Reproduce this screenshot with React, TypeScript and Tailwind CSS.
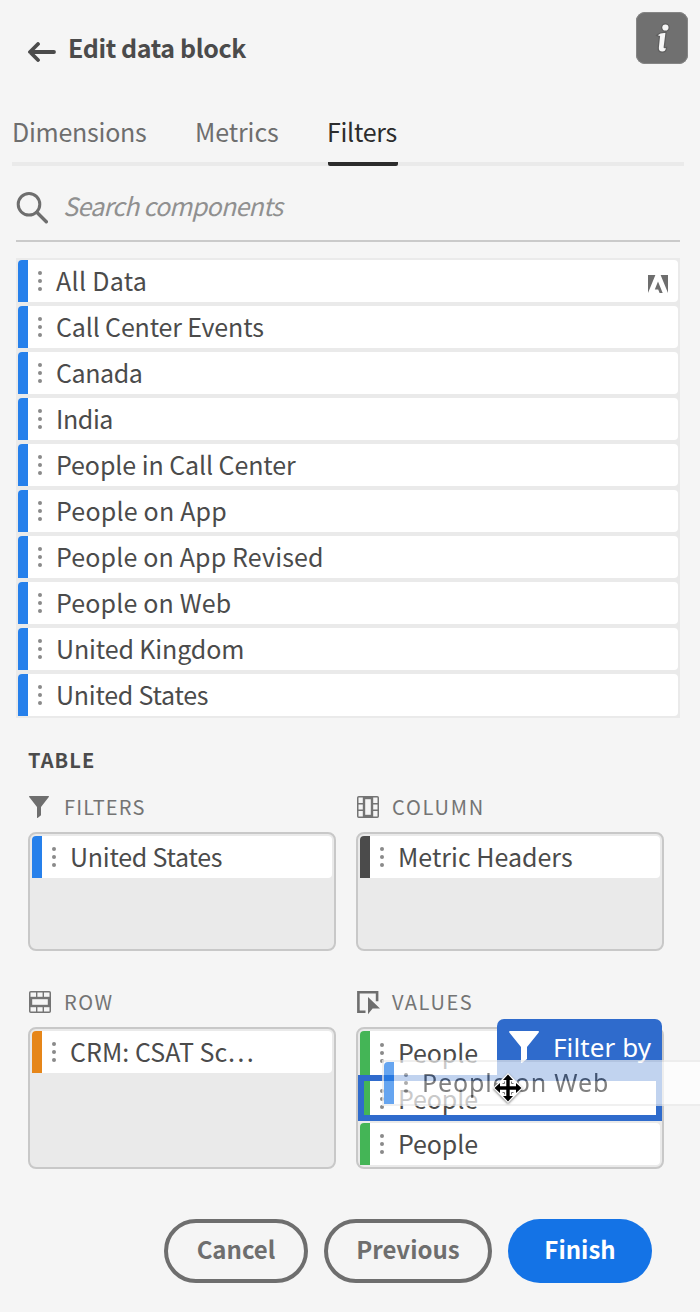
import type { ReactNode } from "react";

const components = [
  { name: "All Data", spacing: "tracking-[0.3px]", adobe: true },
  { name: "Call Center Events", spacing: "tracking-[-0.15px]" },
  { name: "Canada", spacing: "tracking-[-0.4px]" },
  { name: "India", spacing: "tracking-[-0.4px]" },
  { name: "People in Call Center", spacing: "tracking-[-0.08px]" },
  { name: "People on App", spacing: "tracking-[0.2px]" },
  { name: "People on App Revised", spacing: "tracking-[0.15px]" },
  { name: "People on Web", spacing: "tracking-[0.15px]" },
  { name: "United Kingdom", spacing: "tracking-[-0.12px]" },
  { name: "United States", spacing: "tracking-[-0.25px]" },
];

function AdobeIcon() {
  return (
    <svg width="20" height="18" viewBox="0 0 20 18" fill="#6e6e6e" className="mt-1.5 mr-2.5">
      <path d="M0 0h7.4L0 18zM12.6 0H20v18zM10 6.6L14.7 18h-3.1l-1.4-3.6H6.8z" />
    </svg>
  );
}

function FilterIcon({ className }: { className: string }) {
  return (
    <svg viewBox="0 0 20 22" className={className} fill="currentColor" preserveAspectRatio="none">
      <path d="M.4 0h19.2q.6.4.2 1L12 11v8.2L8.6 22q-.6.2-.6-.5V11L.2 1Q-.1.4.4 0z" />
    </svg>
  );
}

function ColumnIcon() {
  return (
    <svg width="22" height="22" viewBox="0 0 22 22" className="ml-px" fill="none" stroke="#747474">
      <rect x=".75" y=".75" width="20.5" height="20.5" rx="1" strokeWidth="1.5" />
      <path d="M1 7.7h5M1 14.3h5M16 7.7h5M16 14.3h5" strokeWidth="1.4" />
      <rect x="7" y="2" width="8" height="18" strokeWidth="2.4" />
    </svg>
  );
}

function RowIcon() {
  return (
    <svg width="22" height="22" viewBox="0 0 22 22" className="ml-px" fill="none" stroke="#747474">
      <rect x=".75" y=".75" width="20.5" height="20.5" rx="1" strokeWidth="1.5" />
      <path d="M7.7 1v5M14.3 1v5M7.7 16v5M14.3 16v5" strokeWidth="1.4" />
      <rect x="2" y="7" width="18" height="8" strokeWidth="2.4" />
    </svg>
  );
}

function ValuesIcon() {
  return (
    <svg width="23" height="24" viewBox="0 0 23 24" className="mt-0.5 ml-px" fill="none">
      <path d="M8.5 20.7H1.4V1.3h18.7v9" stroke="#6e6e6e" strokeWidth="2.6" />
      <path d="M11 6v17.2l4.6-5.6H23z" fill="#6e6e6e" />
    </svg>
  );
}

function Item({
  label,
  color,
  spacing = "tracking-[-0.1px]",
  height = "h-[42px]",
  trailing,
}: {
  label: string;
  color: string;
  spacing?: string;
  height?: string;
  trailing?: ReactNode;
}) {
  return (
    <div className={`flex shrink-0 items-center rounded-[4px] bg-white ${height}`}>
      <div className={`h-full w-2.5 shrink-0 rounded-tl-[4px] ${color}`} />
      <svg width="4" height="20" viewBox="0 0 4 20" className="mr-[14px] ml-2.5 shrink-0" fill="#8a8a8a">
        <circle cx="2" cy="2" r="2" />
        <circle cx="2" cy="10" r="2" />
        <circle cx="2" cy="18" r="2" />
      </svg>
      <span className={`-mt-[3px] flex-1 text-[25px] leading-[42px] whitespace-nowrap text-[#4b4b4b] ${spacing}`}>
        {label}
      </span>
      {trailing}
    </div>
  );
}

function Zone({
  title,
  spacing,
  icon,
  height,
  children,
}: {
  title: string;
  spacing: string;
  icon: ReactNode;
  height: string;
  children: ReactNode;
}) {
  return (
    <section className="w-[308px]">
      <div className="flex h-[26px] items-center">
        <div className="flex w-9 shrink-0 items-center">{icon}</div>
        <h3 className={`text-[20px] leading-[26px] text-[#747474] ${spacing}`}>{title}</h3>
      </div>
      <div
        className={`relative mt-3 flex flex-col gap-1 rounded-[8px] border-2 border-[#c8c8c8] bg-[#eaeaea] p-0.5 ${height}`}
      >
        {children}
      </div>
    </section>
  );
}

export default function App() {
  return (
    <main className="flex h-[1312px] w-[700px] flex-col overflow-hidden bg-[#f5f5f5] font-['Noto_Sans_CJK_SC','Noto_Sans',sans-serif]">
      <header className="flex h-[98px] shrink-0 items-start justify-between pt-3 pr-3 pl-7">
        <div className="flex items-start pt-4">
          <svg width="28" height="20" viewBox="0 0 28 20" className="mt-[14px] mr-3" fill="none" stroke="#4b4b4b" strokeWidth="3.8" strokeLinecap="round" strokeLinejoin="round">
            <path d="M26 10H2.2M10 2L2 10l8 8" />
          </svg>
          <h1 className="text-[25px] leading-[38px] font-bold tracking-[-0.38px] text-[#4b4b4b]">Edit data block</h1>
        </div>
        <button className="flex size-[52px] items-center justify-center rounded-[9px] bg-[#707070] ring-1 ring-[#868686] ring-inset">
          <svg width="18" height="34" viewBox="0 0 18 34" className="ml-[3px]">
            <g stroke="#5f5f5f" strokeWidth="2.5">
              <circle cx="10.4" cy="6.5" r="3.1" fill="#f6f6f6" />
              <path d="M2.8 14.2q2.800-2.600 7.600-2.200L8.600 26.300q-.1 1.400 2.300.8-.4 3.500-3.500 3.500-4 0-3.500-4.300l1.200-11.300z" fill="#f6f6f6" />
            </g>
            <circle cx="10.4" cy="6.5" r="3.1" fill="#f6f6f6" />
            <path d="M2.8 14.2q2.800-2.600 7.600-2.200L8.600 26.300q-.1 1.400 2.300.8-.4 3.500-3.500 3.500-4 0-3.500-4.300l1.200-11.300z" fill="#f6f6f6" />
          </svg>
        </button>
      </header>

      <nav className="mx-3 mr-4 flex h-[68px] shrink-0 items-stretch border-b-4 border-[#eaeaea] text-[25px] leading-[66px] text-[#6e6e6e]">
        <span className="w-[183px] tracking-[-0.25px]">Dimensions</span>
        <span className="w-[133px] tracking-[-0.1px]">Metrics</span>
        <span className="-mb-1 h-[68px] w-[70px] rounded-b-[2px] border-b-4 border-[#2c2c2c] tracking-[-0.3px] text-[#2c2c2c]">
          <span className="-ml-px">Filters</span>
        </span>
      </nav>

      <div className="mx-4 mr-5 flex h-[76px] shrink-0 items-center border-b-2 border-[#cacaca] pt-2">
        <svg width="32" height="32" viewBox="0 0 32 32" className="mt-0.5 mr-[15px]" fill="none" stroke="#6e6e6e">
          <circle cx="13" cy="12.3" r="10.8" strokeWidth="3" />
          <path d="M20.8 20.3l9.5 9.5" strokeWidth="3.4" strokeLinecap="round" />
        </svg>
        <span className="-mt-1 text-[25px] leading-9 tracking-[-0.73px] text-[#909090] italic">Search components</span>
      </div>

      <div className="mt-4 mr-5 ml-4 flex h-[460px] shrink-0 flex-col gap-1 bg-[#eaeaea] p-0.5">
        {components.map((c) => (
          <Item key={c.name} label={c.name} color="bg-[#2680eb]" spacing={c.spacing} trailing={c.adobe && <AdobeIcon />} />
        ))}
      </div>

      <h2 className="mt-7 ml-7 text-[20px] leading-7 font-bold tracking-[1.1px] text-[#4b4b4b]">TABLE</h2>

      <div className="mt-5 ml-7 grid grid-cols-[308px_308px] gap-x-5 gap-y-[38px]">
        <Zone
          title="FILTERS"
          spacing="tracking-[1.2px]"
          height="h-[119px]"
          icon={<FilterIcon className="ml-px h-[22px] w-5 text-[#6e6e6e]" />}
        >
          <Item label="United States" color="bg-[#2680eb]" spacing="tracking-[-0.25px]" />
        </Zone>
        <Zone title="COLUMN" spacing="tracking-[1.8px]" height="h-[119px]" icon={<ColumnIcon />}>
          <Item label="Metric Headers" color="bg-[#4b4b4b]" spacing="tracking-[0px]" />
        </Zone>
        <Zone title="ROW" spacing="tracking-[1.6px]" height="h-[142px]" icon={<RowIcon />}>
          <Item label="CRM: CSAT Sc…" color="bg-[#e68619]" spacing="tracking-[0.05px]" />
        </Zone>
        <Zone title="VALUES" spacing="tracking-[1.6px]" height="h-[142px]" icon={<ValuesIcon />}>
          <Item label="People" color="bg-[#44b556]" height="h-11 -mb-0.5" />
          <Item label="People" color="bg-[#44b556]" height="h-11 -mb-0.5" />
          <Item label="People" color="bg-[#44b556]" />
          <div className="absolute top-[46px] left-0 h-[46px] w-[304px] border-[6px] border-[#2f6bcc]" />
          <div className="absolute top-[-10px] left-[139px] flex h-[62px] w-[165px] items-start rounded-t-[7px] bg-[#2f6bcc] text-white">
            <FilterIcon className="mt-3 ml-3 h-8 w-[30px]" />
            <span className="ml-[14px] font-['Noto_Sans',sans-serif] text-[26px] leading-[56px] tracking-[0.1px] whitespace-nowrap">
              Filter by
            </span>
          </div>
          <div className="absolute top-[31px] left-6 w-[340px] border-2 border-[#eaeaea] bg-white font-['Noto_Sans',sans-serif] opacity-70">
            <Item label="People on Web" color="bg-[#2680eb]" spacing="tracking-[0.85px]" />
          </div>
          <svg width="32" height="34" viewBox="-16 -16 32 34" className="absolute top-[43px] left-[134px] drop-shadow-[0_1px_1px_rgba(0,0,0,0.5)]">
            <path d="M0-15L15 0 0 15-15 0z" fill="#fff" />
            <path d="M0-13.500l5 5.500H1.700v6.300H8V-5l5.500 5L8 5V1.700H1.700V8H5L0 13.500-5 8h3.300V1.700H-8V5l-5.500-5L-8-5v3.300h6.300V-8H-5z" fill="#000" />
            <path d="M-5.500-4.500h2v-2M3.500-6.500v2h2M5.500 4.500h-2v2M-3.500 6.500v-2h-2" fill="none" stroke="#555" strokeWidth=".8" />
          </svg>
        </Zone>
      </div>

      <footer className="mt-[50px] mr-12 flex shrink-0 justify-end gap-4 text-[24px] leading-[60px] font-bold">
        <button className="flex h-16 w-36 items-center justify-center rounded-full border-4 border-[#6e6e6e] text-[#6e6e6e]">
          <span className="-mt-1">Cancel</span>
        </button>
        <button className="flex h-16 w-[168px] items-center justify-center rounded-full border-4 border-[#6e6e6e] text-[#6e6e6e]">
          <span className="-mt-1">Previous</span>
        </button>
        <button className="flex h-16 w-36 items-center justify-center rounded-full bg-[#1473e6] text-white">
          <span className="-mt-1">Finish</span>
        </button>
      </footer>
    </main>
  );
}
